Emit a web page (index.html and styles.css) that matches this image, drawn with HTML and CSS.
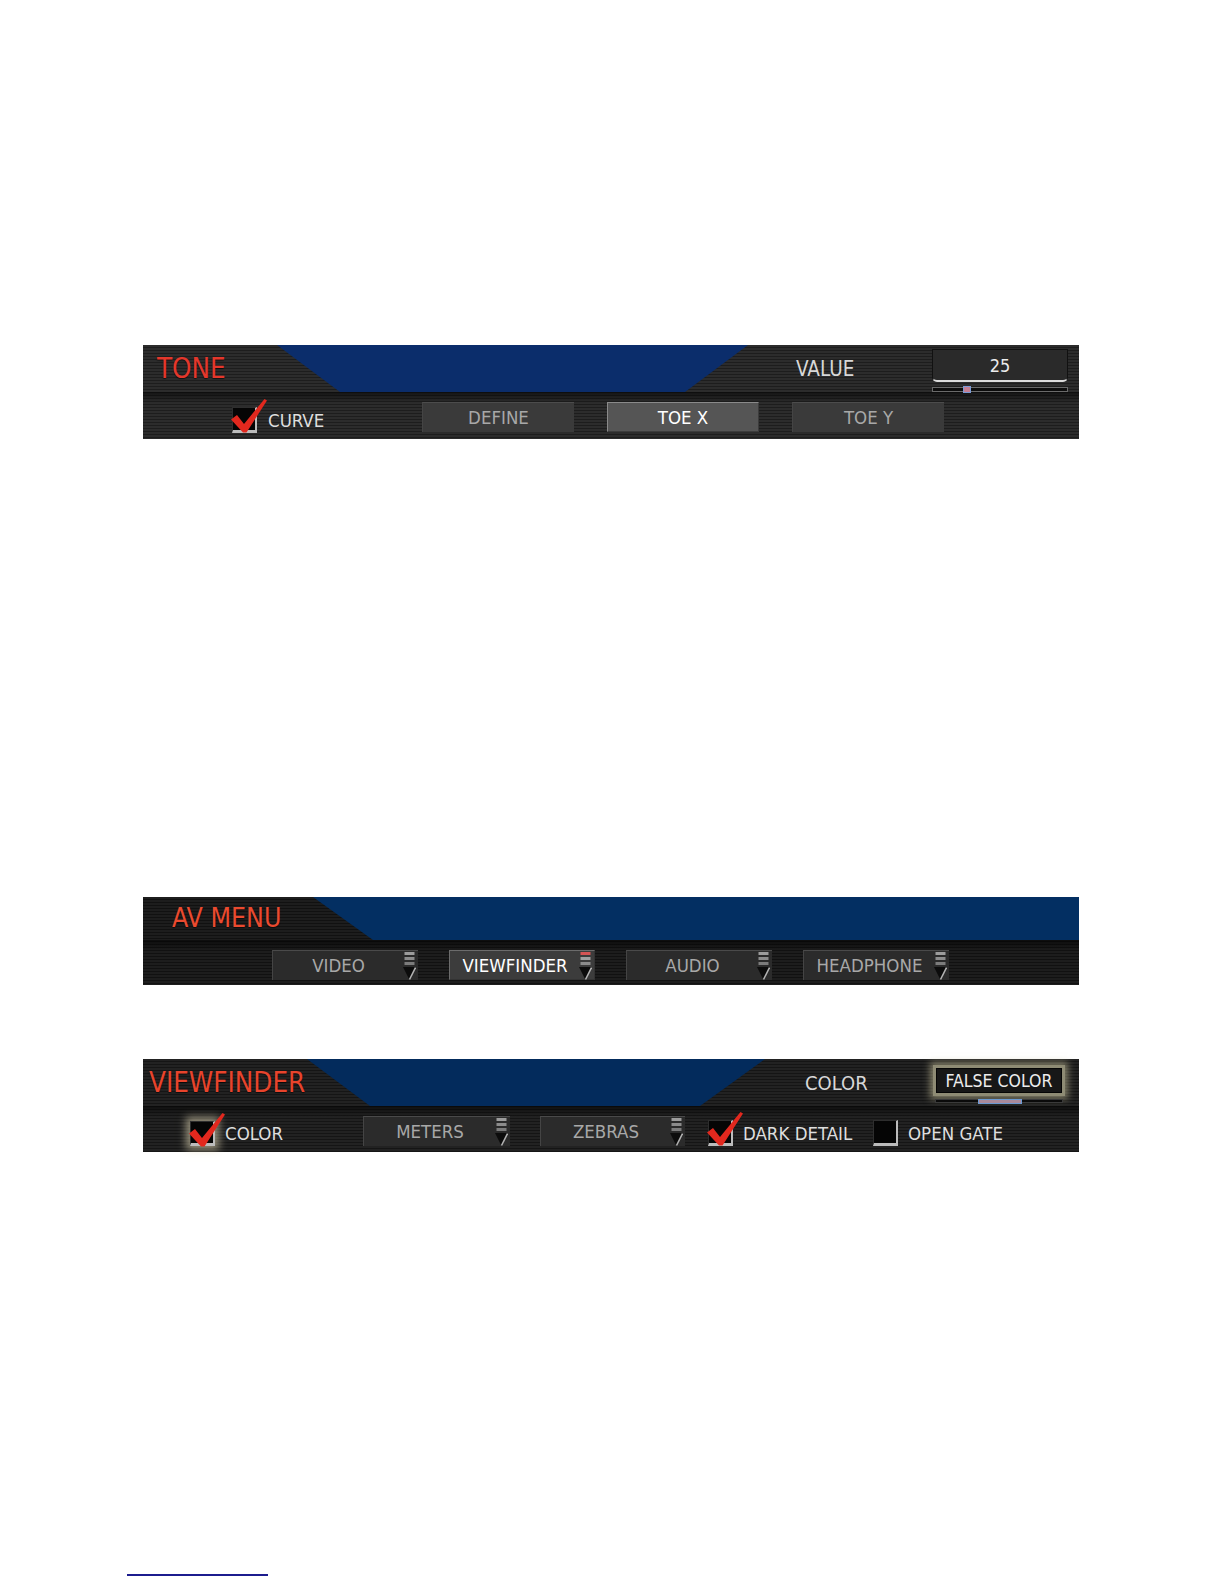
FILE: index.html
```html
<!DOCTYPE html>
<html lang="en">
<head>
<meta charset="utf-8">
<title>Camera menus</title>
<link rel="stylesheet" href="styles.css">
</head>
<body>
<main class="page">

  <section class="panel tone">
    <div class="top">
      <h2 class="title">TONE</h2>
      <div class="wedge"></div>
      <div class="top-right">
        <span class="label">VALUE</span>
        <div class="value-widget">
          <div class="value-box">25</div>
          <div class="track"><span class="thumb"></span></div>
        </div>
      </div>
    </div>
    <div class="bottom">
      <div class="check">
        <span class="box">
          <svg class="tick" viewBox="-2 -10 40 40" width="40" height="40"><path d="M-1 12.5 L5 8 L12 17 L32.5 -8 L35 -6.5 L14.5 25.5 L11 25.5 Z" fill="#e2281e"/></svg>
        </span>
        <span class="check-label">CURVE</span>
      </div>
      <div class="btn">DEFINE</div>
      <div class="btn active">TOE X</div>
      <div class="btn">TOE Y</div>
    </div>
  </section>

  <section class="panel av">
    <div class="top">
      <h2 class="title">AV MENU</h2>
      <div class="wedge"></div>
    </div>
    <div class="bottom">
      <div class="btn dd">VIDEO
        <svg class="ind" viewBox="0 0 13 29" width="13" height="29"><rect x="1.5" y="1" width="10" height="3" fill="#9c9c9c"/><rect x="1.5" y="6" width="10" height="3" fill="#8c8c8c"/><rect x="1.5" y="11" width="10" height="3" fill="#7c7c7c"/><path d="M0 16 H13 L6.5 29 Z" fill="#0c0c0c"/><path d="M12.5 16.5 L6.5 28.5" stroke="#b4b4b4" stroke-width="1.6"/></svg>
      </div>
      <div class="btn dd active">VIEWFINDER
        <svg class="ind" viewBox="0 0 13 29" width="13" height="29"><rect x="1.5" y="1" width="10" height="3" fill="#d45454"/><rect x="1.5" y="6" width="10" height="3" fill="#a0a0a0"/><rect x="1.5" y="11" width="10" height="3" fill="#8c8c8c"/><path d="M0 16 H13 L6.5 29 Z" fill="#0c0c0c"/><path d="M12.5 16.5 L6.5 28.5" stroke="#b8b8b8" stroke-width="1.6"/></svg>
      </div>
      <div class="btn dd">AUDIO
        <svg class="ind" viewBox="0 0 13 29" width="13" height="29"><rect x="1.5" y="1" width="10" height="3" fill="#9c9c9c"/><rect x="1.5" y="6" width="10" height="3" fill="#8c8c8c"/><rect x="1.5" y="11" width="10" height="3" fill="#7c7c7c"/><path d="M0 16 H13 L6.5 29 Z" fill="#0c0c0c"/><path d="M12.5 16.5 L6.5 28.5" stroke="#b4b4b4" stroke-width="1.6"/></svg>
      </div>
      <div class="btn dd">HEADPHONE
        <svg class="ind" viewBox="0 0 13 29" width="13" height="29"><rect x="1.5" y="1" width="10" height="3" fill="#9c9c9c"/><rect x="1.5" y="6" width="10" height="3" fill="#8c8c8c"/><rect x="1.5" y="11" width="10" height="3" fill="#7c7c7c"/><path d="M0 16 H13 L6.5 29 Z" fill="#0c0c0c"/><path d="M12.5 16.5 L6.5 28.5" stroke="#b4b4b4" stroke-width="1.6"/></svg>
      </div>
    </div>
  </section>

  <section class="panel vf">
    <div class="top">
      <h2 class="title">VIEWFINDER</h2>
      <div class="wedge"></div>
      <div class="top-right">
        <span class="label">COLOR</span>
        <div class="value-widget">
          <div class="false-box">FALSE COLOR</div>
          <div class="track wide"><span class="thumb wide"></span></div>
        </div>
      </div>
    </div>
    <div class="bottom">
      <div class="check g-color">
        <span class="box glow">
          <svg class="tick" viewBox="-2 -10 40 40" width="40" height="40"><path d="M-1 12.5 L5 8 L12 17 L32.5 -8 L35 -6.5 L14.5 25.5 L11 25.5 Z" fill="#e2281e"/></svg>
        </span>
        <span class="check-label">COLOR</span>
      </div>
      <div class="btn dd meters">METERS
        <svg class="ind" viewBox="0 0 13 29" width="13" height="29"><rect x="1.5" y="1" width="10" height="3" fill="#9c9c9c"/><rect x="1.5" y="6" width="10" height="3" fill="#8c8c8c"/><rect x="1.5" y="11" width="10" height="3" fill="#7c7c7c"/><path d="M0 16 H13 L6.5 29 Z" fill="#0c0c0c"/><path d="M12.5 16.5 L6.5 28.5" stroke="#b4b4b4" stroke-width="1.6"/></svg>
      </div>
      <div class="btn dd zebras">ZEBRAS
        <svg class="ind" viewBox="0 0 13 29" width="13" height="29"><rect x="1.5" y="1" width="10" height="3" fill="#9c9c9c"/><rect x="1.5" y="6" width="10" height="3" fill="#8c8c8c"/><rect x="1.5" y="11" width="10" height="3" fill="#7c7c7c"/><path d="M0 16 H13 L6.5 29 Z" fill="#0c0c0c"/><path d="M12.5 16.5 L6.5 28.5" stroke="#b4b4b4" stroke-width="1.6"/></svg>
      </div>
      <div class="check g-dark">
        <span class="box">
          <svg class="tick" viewBox="-2 -10 40 40" width="40" height="40"><path d="M-1 12.5 L5 8 L12 17 L32.5 -8 L35 -6.5 L14.5 25.5 L11 25.5 Z" fill="#e2281e"/></svg>
        </span>
        <span class="check-label">DARK DETAIL</span>
      </div>
      <div class="check g-gate">
        <span class="box"></span>
        <span class="check-label">OPEN GATE</span>
      </div>
    </div>
  </section>

  <div class="footnote-rule"></div>
</main>
</body>
</html>
```

FILE: styles.css
```css
* { box-sizing: border-box; }

html, body {
  margin: 0;
  background: #ffffff;
}

body {
  font-family: "DejaVu Sans Condensed", "DejaVu Sans", "Liberation Sans", sans-serif;
  font-stretch: condensed;
}

.page {
  width: 1224px;
  height: 1584px;
  padding-top: 345px;
  overflow: hidden;
}

/* ---------- panel shell ---------- */
.panel {
  width: 936px;
  margin-left: 143px;
  display: flex;
  flex-direction: column;
  background: repeating-linear-gradient(to bottom, #2c2c2c 0 2px, #1d1d1d 2px 3px);
}

.top {
  display: grid;
}

.title {
  margin: 0;
  font-weight: normal;
  line-height: 1;
  align-self: center;
  white-space: nowrap;
  text-shadow: 0 1px 1px rgba(0, 0, 0, 0.6);
}

.wedge {
  background: #0b2d6b;
}

.top-right {
  display: flex;
  align-items: center;
}

.label {
  color: #d8d8d8;
  font-size: 20px;
  white-space: nowrap;
}

.value-widget {
  align-self: flex-start;
  display: flex;
  flex-direction: column;
}

.bottom {
  display: flex;
  align-items: flex-start;
  padding-top: 10px;
  background: linear-gradient(to bottom, rgba(0, 0, 0, 0.55), rgba(0, 0, 0, 0) 11px);
}

/* ---------- buttons ---------- */
.btn {
  height: 30px;
  display: flex;
  align-items: center;
  justify-content: center;
  background: #3a3a3a;
  color: #a8a8a8;
  font-size: 18.5px;
  border-top: 1px solid #4c4c4c;
  border-left: 1px solid #444;
  white-space: nowrap;
  position: relative;
}

.btn.active {
  background: #555555;
  color: #ffffff;
  border: 1px solid #8a8a8a;
  border-right-color: #3c3c3c;
  border-bottom-color: #3c3c3c;
}

.btn.dd {
  padding-right: 14px;
  background: #2b2b2b;
  border-top-color: #4a4a4a;
}

.btn.dd.active {
  background: #3c3c3c;
  border-color: #6c6c6c;
  border-right-color: #333;
  border-bottom-color: #333;
}

.ind {
  position: absolute;
  right: 2px;
  top: 0;
}

/* ---------- checkboxes ---------- */
.check {
  display: flex;
  align-items: center;
  gap: 11px;
  margin-top: 5px;
}

.check-label {
  color: #dedede;
  font-size: 18.5px;
  white-space: nowrap;
}

.box {
  position: relative;
  flex: none;
  width: 25px;
  height: 26px;
  background: #050505;
  border-top: 1px solid #2e2e2e;
  border-left: 1px solid #2e2e2e;
  border-right: 2px solid #bcbcbc;
  border-bottom: 3px solid #bcbcbc;
}

.box.glow {
  box-shadow: 0 0 8px 4px rgba(226, 216, 182, 0.6);
}

.tick {
  position: absolute;
  left: -3px;
  top: -11px;
  overflow: visible;
}

/* ---------- TONE ---------- */
.tone .top {
  height: 47px;
  grid-template-columns: 134px 471px 1fr;
}

.tone .title {
  padding-left: 14px;
  font-size: 27.5px;
  color: #e4372b;
}

.tone .wedge {
  clip-path: polygon(0 0, 100% 0, calc(100% - 63px) 100%, 63px 100%);
}

.tone .top-right {
  padding-left: 48px;
}

.tone .label {
  width: 136px;
  font-size: 20.5px;
}

.tone .value-widget {
  width: 136px;
  margin-top: 4px;
  gap: 5px;
}

.value-box {
  height: 33px;
  display: flex;
  align-items: center;
  justify-content: center;
  background: #2a2a2a;
  color: #ececec;
  font-size: 18px;
  border: 1px solid #111;
  border-bottom: 2px solid #dcdcdc;
  border-radius: 0 0 5px 5px;
}

.track {
  position: relative;
  height: 5px;
  background: #0c0c0c;
  border: 1px solid #6a6a6a;
}

.thumb {
  position: absolute;
  left: 30px;
  top: -2px;
  width: 8px;
  height: 7px;
  background: #c47f94;
  border: 1px solid #7b9bd6;
}

.tone .bottom {
  height: 47px;
  padding-left: 89px;
  gap: 33px;
}

.tone .check {
  width: 157px;
}

.tone .btn {
  width: 152px;
}

/* ---------- AV MENU ---------- */
.av {
  margin-top: 458px;
  background: repeating-linear-gradient(to bottom, #1d1d1d 0 2px, #111111 2px 3px);
}

.av .top {
  height: 43px;
  grid-template-columns: 170px 1fr;
}

.av .title {
  padding-left: 29px;
  font-size: 26.5px;
  color: #ea4a2f;
}

.av .wedge {
  background: #032f62;
  clip-path: polygon(0 0, 100% 0, 100% 100%, 60px 100%);
}

.av .bottom {
  height: 45px;
  padding-left: 129px;
  gap: 31px;
}

.av .btn {
  width: 146px;
}

/* ---------- VIEWFINDER ---------- */
.vf {
  margin-top: 74px;
  background: repeating-linear-gradient(to bottom, #222222 0 2px, #151515 2px 3px);
}

.vf .top {
  height: 47px;
  grid-template-columns: 164px 458px 1fr;
}

.vf .title {
  padding-left: 6px;
  font-size: 27.5px;
  color: #e8442c;
}

.vf .wedge {
  background: #032b5c;
  clip-path: polygon(0 0, 100% 0, calc(100% - 65px) 100%, 63px 100%);
}

.vf .top-right {
  padding-left: 40px;
}

.vf .label {
  width: 128px;
}

.vf .value-widget {
  width: 132px;
  margin-top: 6px;
  gap: 3px;
}

.false-box {
  height: 31px;
  display: flex;
  align-items: center;
  justify-content: center;
  background: #171717;
  color: #ececec;
  font-size: 17.5px;
  border: 3px solid #8e8b74;
  box-shadow: 0 0 7px 3px rgba(196, 190, 152, 0.6), inset 0 0 0 1px #050505;
}

.track.wide {
  height: 4px;
  margin: 0 2px;
  background: #0a0a0a;
  border: 1px solid #3a3a3a;
}

.thumb.wide {
  left: 42px;
  top: -1px;
  width: 44px;
  height: 5px;
  background: #a98a9b;
  border: 1px solid #6b9ad2;
}

.vf .bottom {
  height: 46px;
  padding-left: 47px;
}

.vf .check {
  margin-top: 4px;
  gap: 10px;
}

.g-color {
  width: 173px;
  gap: 12px;
}

.g-color .box {
  height: 25px;
  margin-top: 1px;
}

.meters {
  width: 147px;
}

.zebras {
  width: 145px;
  margin-left: 30px;
}

.g-dark {
  width: 165px;
  margin-left: 23px;
}

/* ---------- footnote ---------- */
.footnote-rule {
  width: 141px;
  margin: 422px 0 0 127px;
  border-top: 2px solid #1c1c8e;
}
```
